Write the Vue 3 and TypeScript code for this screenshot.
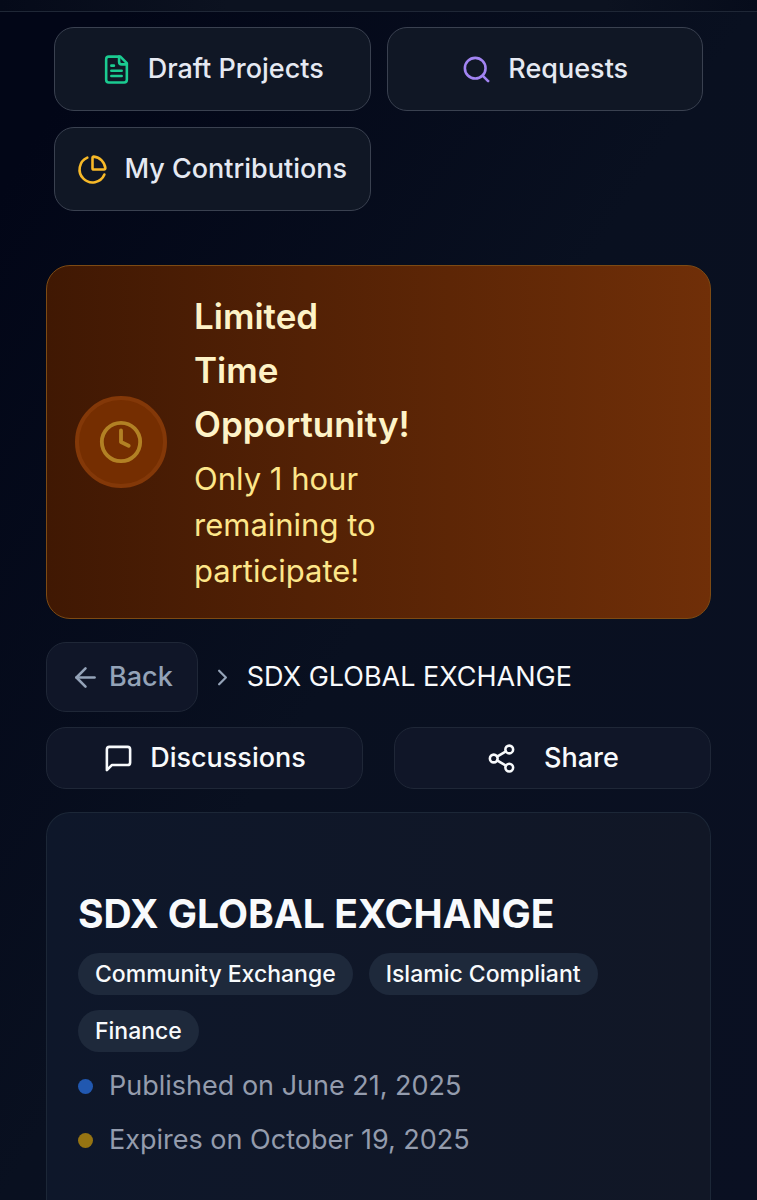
<script setup lang="ts">
interface NavItem {
  label: string
  tone: string
  shapes: string[]
}

const navItems: NavItem[] = [
  {
    label: 'Draft Projects',
    tone: 'green',
    shapes: [
      'M15 2H6a2 2 0 0 0-2 2v16a2 2 0 0 0 2 2h12a2 2 0 0 0 2-2V7Z',
      'M14 2v4a2 2 0 0 0 2 2h4',
      'M10 9H8',
      'M16 13H8',
      'M16 17H8',
    ],
  },
  {
    label: 'Requests',
    tone: 'violet',
    shapes: ['M19 11a8 8 0 1 1-16 0a8 8 0 0 1 16 0Z', 'm21 21-4.3-4.3'],
  },
  {
    label: 'My Contributions',
    tone: 'amber',
    shapes: [
      'M21 12c.552 0 1.005-.449.95-.998a10 10 0 0 0-8.953-8.951c-.55-.055-.998.398-.998.95v8a1 1 0 0 0 1 1z',
      'M21.21 15.89A10 10 0 1 1 8 2.83',
    ],
  },
]

const tags: string[] = ['Community Exchange', 'Islamic Compliant', 'Finance']

const dates = [
  { text: 'Published on June 21, 2025', tone: 'blue' },
  { text: 'Expires on October 19, 2025', tone: 'gold' },
]
</script>

<template>
  <div class="page">
    <header class="topbar"></header>

    <nav class="quick-nav" aria-label="Projects">
      <a v-for="item in navItems" :key="item.label" class="quick-link" href="#">
        <svg class="icon" :class="item.tone" viewBox="0 0 24 24" aria-hidden="true">
          <path v-for="d in item.shapes" :key="d" :d="d" />
        </svg>
        <span>{{ item.label }}</span>
      </a>
    </nav>

    <main class="content">
      <section class="banner">
        <div class="clock">
          <svg class="icon clock-icon" viewBox="0 0 24 24" aria-hidden="true">
            <circle cx="12" cy="12" r="10" />
            <path d="M12 6v6l4 2" />
          </svg>
        </div>
        <div class="banner-text">
          <h2>Limited Time Opportunity!</h2>
          <p>Only 1 hour remaining to participate!</p>
        </div>
      </section>

      <nav class="crumbs" aria-label="Breadcrumb">
        <button class="back" type="button">
          <svg class="icon" viewBox="0 0 24 24" aria-hidden="true">
            <path d="m12 19-7-7 7-7" />
            <path d="M19 12H5" />
          </svg>
          <span>Back</span>
        </button>
        <svg class="icon chevron" viewBox="0 0 24 24" aria-hidden="true">
          <path d="m9 18 6-6-6-6" />
        </svg>
        <span class="current">SDX GLOBAL EXCHANGE</span>
      </nav>

      <div class="actions">
        <button class="action" type="button">
          <svg class="icon" viewBox="0 0 24 24" aria-hidden="true">
            <path d="M21 15a2 2 0 0 1-2 2H7l-4 4V5a2 2 0 0 1 2-2h14a2 2 0 0 1 2 2z" />
          </svg>
          <span>Discussions</span>
        </button>
        <button class="action share" type="button">
          <svg class="icon" viewBox="0 0 24 24" aria-hidden="true">
            <circle cx="18" cy="5" r="3" />
            <circle cx="6" cy="12" r="3" />
            <circle cx="18" cy="19" r="3" />
            <path d="m8.59 13.51 6.83 3.98" />
            <path d="m15.41 6.51-6.82 3.98" />
          </svg>
          <span>Share</span>
        </button>
      </div>

      <article class="card">
        <h1>SDX GLOBAL EXCHANGE</h1>
        <ul class="tags">
          <li v-for="tag in tags" :key="tag">{{ tag }}</li>
        </ul>
        <ul class="dates">
          <li v-for="date in dates" :key="date.text">
            <span class="dot" :class="date.tone"></span>
            <span>{{ date.text }}</span>
          </li>
        </ul>
      </article>
    </main>
  </div>
</template>

<style>
body {
  margin: 0;
  background: #020617;
}
</style>

<style scoped>
.page {
  box-sizing: border-box;
  min-height: 100vh;
  display: flex;
  flex-direction: column;
  background: linear-gradient(to bottom right, #020617 0%, #020617 8%, #091020 50%, #0a1022 100%);
  color: #f8fafc;
  font-family: Inter, "Liberation Sans", sans-serif;
  font-size: 27px;
  line-height: 38px;
}

.topbar {
  height: 11px;
  background: linear-gradient(to right, #050a19, #0c1220 30%, #0c1220 80%, #060c1b);
  border-bottom: 1px solid #1f2736;
}

.icon {
  flex: none;
  width: 31px;
  height: 31px;
  fill: none;
  stroke: currentColor;
  stroke-width: 2;
  stroke-linecap: round;
  stroke-linejoin: round;
}

.green { color: #1bcb91; }
.violet { color: #a284f2; }
.amber { color: #f7b928; }

.quick-nav {
  display: grid;
  grid-template-columns: 1fr 1fr;
  gap: 16px;
  padding: 15px 54px 0;
}

.quick-link {
  box-sizing: border-box;
  height: 84px;
  display: flex;
  align-items: center;
  justify-content: center;
  gap: 16px;
  border: 1px solid #3a4150;
  border-radius: 20px;
  background: #101725;
  color: #e5e9f2;
  font-weight: 500;
  text-decoration: none;
  white-space: nowrap;
}

.content {
  flex: 1;
  display: flex;
  flex-direction: column;
  padding: 54px 46px 0;
}

.banner {
  display: flex;
  align-items: center;
  gap: 27px;
  padding: 23px 28px 24px;
  border: 1px solid #7d4a13;
  border-radius: 24px;
  background: linear-gradient(to right, #401803, #702f08);
}

.clock {
  flex: none;
  box-sizing: border-box;
  width: 92px;
  height: 92px;
  display: grid;
  place-items: center;
  border: 4px solid #833808;
  border-radius: 50%;
  background: #752e01;
  color: #b28124;
}

.clock-icon {
  width: 46px;
  height: 46px;
}

.banner-text {
  width: min-content;
}

.banner h2 {
  margin: 0 0 5px;
  color: #fef3c7;
  font-size: 35px;
  line-height: 54px;
  font-weight: 600;
}

.banner p {
  margin: 0;
  color: #fde68a;
  font-size: 31px;
  line-height: 46px;
}

.crumbs {
  display: flex;
  align-items: center;
  gap: 11px;
  margin-top: 23px;
}

.back,
.action {
  box-sizing: border-box;
  display: flex;
  align-items: center;
  justify-content: center;
  margin: 0;
  border: 1px solid #1f2737;
  border-radius: 20px;
  background: #101628;
  font: inherit;
  font-weight: 500;
  cursor: pointer;
}

.back {
  height: 70px;
  gap: 8px;
  padding: 0 24px 0 23px;
  color: #94a3b8;
}

.chevron {
  width: 27px;
  height: 27px;
  color: #94a3b8;
}

.actions {
  display: grid;
  grid-template-columns: 1fr 1fr;
  gap: 31px;
  margin-top: 15px;
}

.action {
  height: 62px;
  gap: 16px;
  padding: 0 16px;
  color: #f8fafc;
}

.share {
  gap: 27px;
}

.card {
  flex: 1;
  margin-top: 23px;
  padding: 74px 31px 32px;
  border: 1px solid #1c2737;
  border-bottom: 0;
  border-radius: 24px 24px 0 0;
  background: linear-gradient(to right, #0e172a, #111726);
}

.card h1 {
  margin: 0 0 12px;
  font-size: 39px;
  line-height: 54px;
  font-weight: 700;
}

.tags,
.dates {
  margin: 0;
  padding: 0;
  list-style: none;
}

.tags {
  display: flex;
  flex-wrap: wrap;
  gap: 15px 16px;
}

.tags li {
  padding: 5px 17px 4px;
  border-radius: 21px;
  background: #1e293b;
  font-size: 23px;
  line-height: 33px;
  font-weight: 500;
}

.dates {
  display: grid;
  gap: 16px;
  margin-top: 15px;
  color: #949cad;
}

.dates li {
  display: flex;
  align-items: center;
  gap: 16px;
}

.dot {
  flex: none;
  width: 15px;
  height: 15px;
  border-radius: 50%;
}

.blue { background: #2158b0; }
.gold { background: #967412; }
</style>
